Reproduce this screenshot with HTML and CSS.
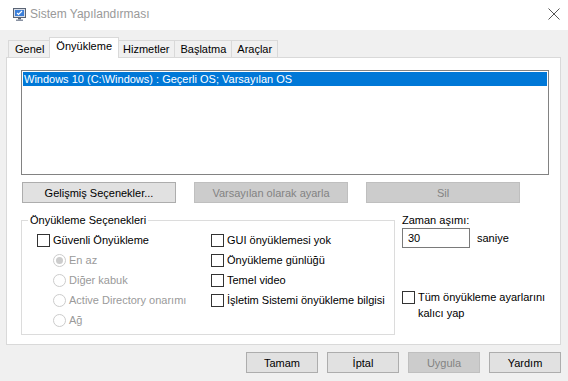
FILE: index.html
```html
<!DOCTYPE html>
<html>
<head>
    <title>Sistem Yapılandırması</title>
    <link rel="stylesheet" href="styles.css">
</head>
<body>
    <div class="window">
        <div class="titlebar">
            <svg class="app-icon" width="13" height="13" viewBox="0 0 13 13">
                <rect x="0.5" y="0.5" width="12" height="9" fill="#d8dde6" stroke="#5a6474"/>
                <rect x="2" y="2" width="9" height="6" fill="#3b7fd9"/>
                <path d="M4 5 L5.5 6.5 L9 3" stroke="#ffffff" stroke-width="1.2" fill="none"/>
                <rect x="5" y="10" width="3" height="1.5" fill="#5a6474"/>
                <rect x="3" y="11.5" width="7" height="1.5" fill="#8a93a3"/>
            </svg>
            <span class="title">Sistem Yapılandırması</span>
            <svg class="close" width="12" height="12" viewBox="0 0 12 12">
                <path d="M0.5 0.5 L11.5 11.5 M11.5 0.5 L0.5 11.5" stroke="#555" stroke-width="1"/>
            </svg>
        </div>

        <div class="client">
            <div class="tabs">
                <div class="tab">Genel</div>
                <div class="tab active">Önyükleme</div>
                <div class="tab">Hizmetler</div>
                <div class="tab">Başlatma</div>
                <div class="tab">Araçlar</div>
            </div>

            <div class="panel">
                <div class="listbox">
                    <div class="list-item selected">Windows 10 (C:\Windows) : Geçerli OS; Varsayılan OS</div>
                </div>

                <div class="list-buttons">
                    <button class="btn">Gelişmiş Seçenekler...</button>
                    <button class="btn" disabled>Varsayılan olarak ayarla</button>
                    <button class="btn" disabled>Sil</button>
                </div>

                <div class="options">
                    <fieldset class="group">
                        <legend>Önyükleme Seçenekleri</legend>
                        <div class="group-cols">
                            <div class="col col-left">
                                <div class="row"><span class="box"></span>Güvenli Önyükleme</div>
                                <div class="row sub disabled"><span class="radio on"></span>En az</div>
                                <div class="row sub disabled"><span class="radio"></span>Diğer kabuk</div>
                                <div class="row sub disabled"><span class="radio"></span>Active Directory onarımı</div>
                                <div class="row sub disabled"><span class="radio"></span>Ağ</div>
                            </div>
                            <div class="col">
                                <div class="row"><span class="box"></span>GUI önyüklemesi yok</div>
                                <div class="row"><span class="box"></span>Önyükleme günlüğü</div>
                                <div class="row"><span class="box"></span>Temel video</div>
                                <div class="row"><span class="box"></span>İşletim Sistemi önyükleme bilgisi</div>
                            </div>
                        </div>
                    </fieldset>

                    <div class="side">
                        <div class="side-label">Zaman aşımı:</div>
                        <div class="timeout">
                            <div class="textbox">30</div>
                            <span class="unit">saniye</span>
                        </div>
                        <div class="persist">
                            <span class="box"></span>
                            <span>Tüm önyükleme ayarlarını<br>kalıcı yap</span>
                        </div>
                    </div>
                </div>
            </div>

            <div class="footer">
                <button class="btn">Tamam</button>
                <button class="btn">İptal</button>
                <button class="btn" disabled>Uygula</button>
                <button class="btn">Yardım</button>
            </div>
        </div>
    </div>
</body>
</html>
```

FILE: styles.css
```css
* {
    box-sizing: border-box;
}
body {
    margin: 0;
    font-family: "Liberation Sans", Arial, sans-serif;
    font-size: 11px;
    color: #000;
}
.window {
    width: 568px;
    height: 381px;
    background: #f0f0f0;
    overflow: hidden;
    white-space: nowrap;
}
.titlebar {
    height: 30px;
    background: #fff;
    display: flex;
    align-items: center;
    padding-left: 13px;
    padding-right: 8px;
}
.app-icon {
    margin-top: -2px;
}
.title {
    margin-left: 4px;
    color: #999;
    font-size: 12px;
    flex: 1;
    margin-top: -2px;
}
.close {
    margin-top: -2px;
}
.tabs {
    display: flex;
    align-items: flex-end;
    padding: 7px 0 0 8px;
    height: 27px;
}
.tab {
    height: 17px;
    line-height: 16px;
    padding: 0 5px;
    border: 1px solid #d9d9d9;
    border-bottom: none;
    margin-left: -1px;
}
.tab:first-child {
    margin-left: 0;
    padding: 0 6px;
}
.tab.active {
    height: 21px;
    line-height: 17px;
    background: #fff;
    margin-bottom: -1px;
    margin-left: -2px;
    margin-right: -1px;
    padding: 0 6px;
    position: relative;
}
.panel {
    margin: 0 7px 0 6px;
    height: 288px;
    background: #fff;
    border: 1px solid #d9d9d9;
    padding: 12px 11px 0 14px;
}
.listbox {
    height: 105px;
    border: 1px solid #828282;
}
.list-item {
    margin: 1px;
    height: 14px;
    line-height: 14px;
    padding-left: 1px;
}
.list-item.selected {
    background: #0078d7;
    color: #fff;
}
.list-buttons {
    display: flex;
    gap: 18px;
    margin: 7px 0 0 1px;
}
.btn {
    font: inherit;
    height: 21px;
    padding: 0;
    background: #e1e1e1;
    border: 1px solid #adadad;
    color: #000;
}
.list-buttons .btn {
    width: 154px;
}
.btn:disabled {
    background: #cccccc;
    border-color: #bfbfbf;
    color: #838383;
}
.options {
    display: flex;
    margin-top: 9px;
}
.group {
    width: 374px;
    margin: 0;
    padding: 2px 0 4px 15px;
    border: 1px solid #dcdcdc;
    height: 123px;
}
.group legend {
    padding: 0 2px;
    margin-left: -9px;
    line-height: 16px;
}
.group-cols {
    display: flex;
}
.col-left {
    width: 174px;
}
.row {
    height: 20px;
    display: flex;
    align-items: center;
}
.row.sub {
    padding-left: 16px;
}
.row.disabled {
    color: #9a9a9a;
}
.box {
    width: 13px;
    height: 13px;
    border: 1px solid #333;
    background: #fff;
    margin-right: 3px;
    flex: none;
}
.radio {
    width: 13px;
    height: 13px;
    border: 1px solid #cccccc;
    border-radius: 50%;
    margin-right: 3px;
    display: flex;
    align-items: center;
    justify-content: center;
}
.radio.on::after {
    content: "";
    width: 7px;
    height: 7px;
    border-radius: 50%;
    background: #cccccc;
}
.side {
    margin-left: 7px;
}
.side-label {
    line-height: 16px;
}
.timeout {
    display: flex;
    align-items: center;
}
.textbox {
    width: 68px;
    height: 20px;
    line-height: 18px;
    border: 1px solid #7a7a7a;
    padding-left: 5px;
}
.unit {
    margin-left: 7px;
}
.persist {
    display: flex;
    align-items: flex-start;
    margin-top: 41px;
    line-height: 16px;
}
.persist .box {
    margin-top: 2px;
}
.footer {
    display: flex;
    justify-content: flex-end;
    gap: 9px;
    padding: 7px 7px 0 0;
}
.footer .btn {
    width: 72px;
}
```
